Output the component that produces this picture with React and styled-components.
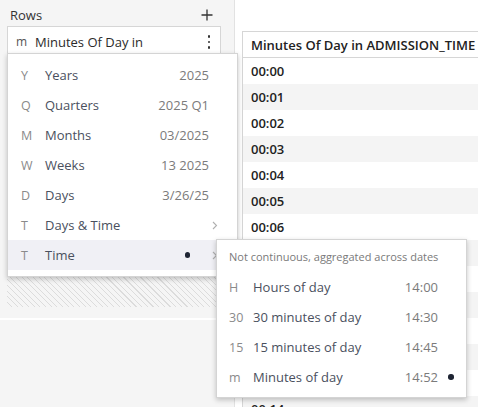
import React from "react";
import styled, { createGlobalStyle } from "styled-components";

const Global = createGlobalStyle`
  html, body { margin: 0; padding: 0; height: 407px; overflow: hidden; }
  body { font-family: "Open Sans", "DejaVu Sans", sans-serif; background: #fff; }
  * { box-sizing: border-box; }
`;

const Page = styled.div`
  position: relative;
  display: flex;
  width: 478px;
  height: 407px;
  overflow: hidden;
`;

const SidePanel = styled.div`
  width: 235px;
  flex: none;
  background: #f5f5f5;
  border-right: 1px solid #e2e2e2;
  display: flex;
  flex-direction: column;
`;

const PanelHeader = styled.div`
  height: 26px;
  display: flex;
  align-items: center;
  justify-content: space-between;
  padding: 3px 21px 0 10px;
  font-size: 13px;
  color: #333;
`;

const Pill = styled.div`
  margin: 0 13px 0 7px;
  background: #fff;
  border: 1px solid #d6d6d6;
  display: flex;
  align-items: flex-start;
  padding: 7px 6px 7px 8px;
  gap: 0;
`;

const PillPrefix = styled.span`
  width: 19px;
  flex: none;
  font-size: 12px;
  line-height: 16px;
  color: #555;
`;

const PillText = styled.span`
  flex: 1;
  font-size: 13px;
  line-height: 16px;
  color: #2b2b2b;
`;

const Kebab = styled.span`
  display: flex;
  flex-direction: column;
  gap: 3px;
  padding: 1px 4px 0;
  & > i {
    display: block;
    width: 2.5px;
    height: 2.5px;
    border-radius: 50%;
    background: #333;
  }
`;

const Hatch = styled.div`
  margin: 0 13px 0 7px;
  height: 233px;
  background: repeating-linear-gradient(
    45deg,
    transparent 0 3.2px,
    #dcdcdc 3.2px 4px
  );
`;

const Divider = styled.div`
  margin-top: 11px;
  height: 2px;
  background: #fff;
`;

const Main = styled.div`
  flex: 1;
  padding: 31px 0 0 7px;
  background: #fff;
`;

const Table = styled.div`
  border-left: 1px solid #d6d6d6;
  border-top: 1px solid #d6d6d6;
`;

const HeadCell = styled.div`
  height: 26px;
  display: flex;
  align-items: center;
  padding-left: 8px;
  font-size: 13px;
  font-weight: 600;
  color: #222;
  white-space: nowrap;
  border-bottom: 1px solid #d6d6d6;
`;

const Cell = styled.div`
  height: 26px;
  display: flex;
  align-items: center;
  padding-left: 8px;
  font-size: 13px;
  font-weight: 600;
  color: #222;
  background: ${(p) => (p.$odd ? "#f4f4f4" : "#fff")};
`;

const Menu = styled.div`
  position: absolute;
  background: #fff;
  border: 1px solid #d4d4d4;
  box-shadow: 0 2px 5px rgba(0, 0, 0, 0.22);
  left: ${(p) => p.$left}px;
  top: ${(p) => p.$top}px;
  width: ${(p) => p.$width}px;
  padding: ${(p) => p.$pad};
`;

const Item = styled.div`
  height: 30px;
  display: grid;
  grid-template-columns: 24px 1fr auto 28px;
  align-items: center;
  padding-left: 13px;
  font-size: 13px;
  background: ${(p) => (p.$active ? "#f0f0f5" : "transparent")};
`;

const SubItem = styled.div`
  height: 30px;
  display: grid;
  grid-template-columns: 24px 1fr auto 28px;
  align-items: center;
  padding-left: 12px;
  font-size: 13px;
`;

const Prefix = styled.span`
  color: #8a8a8a;
  font-size: 12.5px;
`;

const Label = styled.span`
  color: #4a505e;
`;

const Value = styled.span`
  color: #7b7b7b;
  text-align: right;
`;

const Trail = styled.span`
  display: flex;
  align-items: center;
  padding-left: ${(p) => p.$pl || 3}px;
`;

const Dot = styled.i`
  display: block;
  width: 5.5px;
  height: 5.5px;
  border-radius: 50%;
  background: #1e2433;
  margin-right: ${(p) => p.$mr || 0}px;
`;

const SubHeader = styled.div`
  height: 32px;
  display: flex;
  align-items: center;
  padding: 0 12px;
  font-size: 11px;
  color: #7a7a7a;
  white-space: nowrap;
`;

const Chevron = () => (
  <svg width="6" height="9" viewBox="0 0 6 9">
    <polyline points="1,1 4.5,4.5 1,8" fill="none" stroke="#b0b0b0" strokeWidth="1.1" />
  </svg>
);

const Plus = () => (
  <svg width="12" height="12" viewBox="0 0 12 12">
    <path d="M6 0.5V11.5M0.5 6H11.5" stroke="#333" strokeWidth="1.3" />
  </svg>
);

const units = [
  ["Y", "Years", "2025"],
  ["Q", "Quarters", "2025 Q1"],
  ["M", "Months", "03/2025"],
  ["W", "Weeks", "13 2025"],
  ["D", "Days", "3/26/25"],
];

const timeUnits = [
  ["H", "Hours of day", "14:00"],
  ["30", "30 minutes of day", "14:30"],
  ["15", "15 minutes of day", "14:45"],
  ["m", "Minutes of day", "14:52", true],
];

const minutes = [0, 1, 2, 3, 4, 5, 6, 8, 9, 10, 11, 12, 13, 14];

export default function App() {
  return (
    <>
      <Global />
      <Page>
        <SidePanel>
          <PanelHeader>
            <span>Rows</span>
            <Plus />
          </PanelHeader>
          <Pill>
            <PillPrefix>m</PillPrefix>
            <PillText>
              Minutes Of Day in
              <br />
              ADMISSION_TIME
            </PillText>
            <Kebab>
              <i />
              <i />
              <i />
            </Kebab>
          </Pill>
          <Hatch />
          <Divider />
        </SidePanel>
        <Main>
          <Table>
            <HeadCell>Minutes Of Day in ADMISSION_TIME</HeadCell>
            {minutes.map((m, i) => (
              <Cell key={m} $odd={i % 2 === 1}>
                {"00:" + String(m).padStart(2, "0")}
              </Cell>
            ))}
          </Table>
        </Main>

        <Menu $left={7} $top={53} $width={231} $pad="6px 0 6px">
          {units.map(([p, l, v]) => (
            <Item key={l}>
              <Prefix>{p}</Prefix>
              <Label>{l}</Label>
              <Value>{v}</Value>
              <Trail />
            </Item>
          ))}
          <Item>
            <Prefix>T</Prefix>
            <Label>Days &amp; Time</Label>
            <Value />
            <Trail>
              <Chevron />
            </Trail>
          </Item>
          <Item $active>
            <Prefix>T</Prefix>
            <Label>Time</Label>
            <Value>
              <Dot $mr={19} />
            </Value>
            <Trail>
              <Chevron />
            </Trail>
          </Item>
        </Menu>

        <Menu $left={216} $top={239} $width={251} $pad="0 0 5px">
          <SubHeader>Not continuous, aggregated across dates</SubHeader>
          {timeUnits.map(([p, l, v, sel]) => (
            <SubItem key={l}>
              <Prefix>{p}</Prefix>
              <Label>{l}</Label>
              <Value>{v}</Value>
              <Trail $pl={10}>{sel && <Dot />}</Trail>
            </SubItem>
          ))}
        </Menu>
      </Page>
    </>
  );
}
